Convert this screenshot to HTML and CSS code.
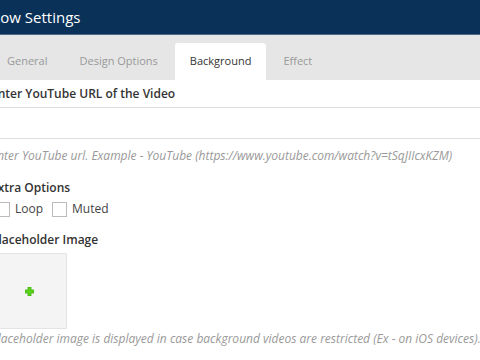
FILE: index.html
```html
<!DOCTYPE html>
<html>
<head>
<meta charset="utf-8">
<link rel="stylesheet" href="styles.css">
</head>
<body>
<div class="panel">
  <div class="header">Row Settings</div>
  <div class="tabs">
    <div class="tab">General</div>
    <div class="tab">Design Options</div>
    <div class="tab active">Background</div>
    <div class="tab">Effect</div>
  </div>
  <div class="content">
    <div class="label">Enter YouTube URL of the Video</div>
    <div class="input"></div>
    <div class="help">Enter YouTube url. Example - YouTube (https://www.youtube.com/watch?v=tSqJIIcxKZM)</div>
    <div class="label label-extra">Extra Options</div>
    <div class="checks">
      <label class="check"><span class="box"></span>Loop</label>
      <label class="check"><span class="box"></span>Muted</label>
    </div>
    <div class="label label-ph">Placeholder Image</div>
    <div class="ph">
      <svg width="9" height="9" viewBox="0 0 9 9"><path d="M3 0h3v3h3v3h-3v3h-3v-3h-3v-3h3z" fill="#5ad31a" stroke="#3fae0c" stroke-width="0.8"/></svg>
    </div>
    <div class="help help-ph">Placeholder image is displayed in case background videos are restricted (Ex - on iOS devices).</div>
  </div>
</div>
</body>
</html>
```
FILE: styles.css
```css
html, body {
  margin: 0;
  padding: 0;
  background: #fff;
  overflow: hidden;
}
body {
  font-family: "Open Sans", "Liberation Sans", sans-serif;
  color: #333;
}
.panel {
  margin-left: -9px;
  width: 560px;
}
.header {
  height: 34px;
  background: #0a3157;
  border-bottom: 1px solid #4f6a85;
  color: #fff;
  font-size: 15px;
  line-height: 34px;
}
.tabs {
  display: flex;
  gap: 2px;
  background: #e6e6e6;
  height: 45px;
  align-items: flex-end;
  padding-left: 1px;
}
.tab {
  height: 37px;
  line-height: 36px;
  padding: 0 15px;
  font-size: 11px;
  color: #999;
  border-radius: 3px 3px 0 0;
}
.tab.active {
  background: #fff;
  color: #333;
}
.label {
  font-size: 12px;
  font-weight: 600;
  color: #333;
  margin-top: 6px;
  line-height: 16px;
}
.input {
  height: 30px;
  border-top: 1px solid #ddd;
  border-bottom: 1px solid #ddd;
  margin-top: 5px;
}
.help {
  font-size: 12px;
  font-style: italic;
  color: #999;
  margin-top: 8px;
  line-height: 17px;
  white-space: nowrap;
}
.label-extra {
  margin-top: 16px;
}
.checks {
  display: flex;
  gap: 5px;
  margin-top: 5px;
  font-size: 12px;
  color: #444;
}
.check {
  display: flex;
  align-items: center;
  gap: 5px;
  line-height: 16px;
}
.box {
  width: 13px;
  height: 13px;
  border: 1px solid #bbb;
  margin-left: 4px;
  background: #fff;
}
.label-ph {
  margin-top: 15px;
}
.ph {
  width: 74px;
  height: 74px;
  border: 1px solid #e4e4e4;
  background: #f4f4f4;
  margin-top: 5px;
  display: flex;
  align-items: center;
  justify-content: center;
}
.help-ph {
  margin-top: 1px;
}
```
